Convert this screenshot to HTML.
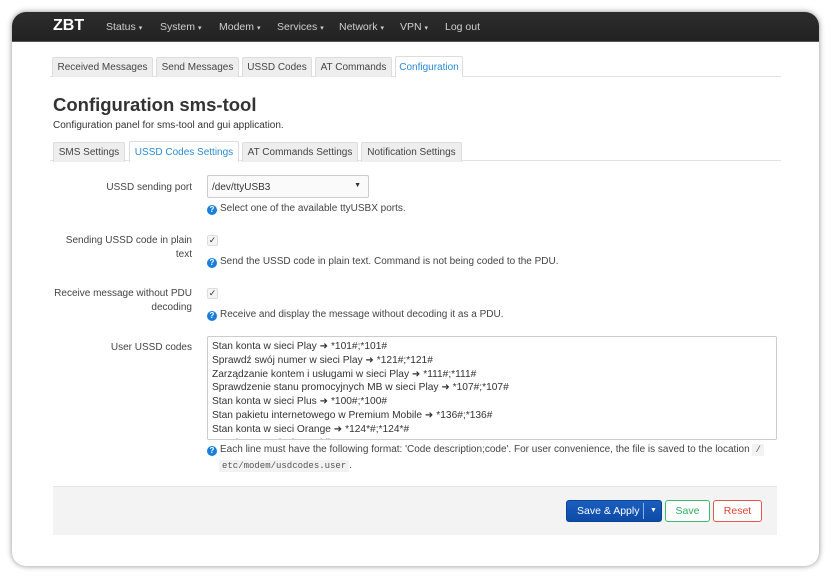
<!DOCTYPE html>
<html><head><meta charset="utf-8"><style>
*{box-sizing:border-box;margin:0;padding:0}
body{width:831px;height:577px;background:#fff;font-family:"Liberation Sans",sans-serif;font-size:10px;color:#404040;position:relative;overflow:hidden}
.frame{position:absolute;left:12px;top:12px;width:807px;height:554px;background:#fff;border-radius:14px;box-shadow:0 0 6px rgba(0,0,0,.45);overflow:hidden}
.nav{position:absolute;left:0;top:0;width:100%;height:30px;background:linear-gradient(#2d2d2d,#222);border-bottom:1px solid #555}
.a{position:absolute;white-space:nowrap}
.nav .a{color:#d0d0d0;font-size:10.5px;top:9px}
.car{font-size:7px}
.tab{position:absolute;height:20px;background:#eee;border:1px solid #ddd;border-bottom:none;border-radius:2px 2px 0 0;color:#444;font-size:10px;text-align:center;line-height:20px;white-space:nowrap}
.tab.act{background:#fff;color:#2a8ad4;height:21px;line-height:22px}
.hline{position:absolute;height:1px;background:#e2e2e2}
.lbl{position:absolute;right:639px;text-align:right;line-height:14px;color:#444;white-space:nowrap}
.help{position:absolute;left:207px;color:#444;white-space:nowrap}
.q{display:inline-block;width:10px;height:10px;border-radius:50%;background:#1a7fd8;color:#fff;font-size:8px;font-weight:bold;text-align:center;line-height:10px;vertical-align:-1px;margin-right:3px}
.cb{position:absolute;left:207px;width:11px;height:11px;border:1px solid #ddd;border-radius:2px;background:#f4f4f4;font-size:9px;line-height:9px;text-align:center;color:#333}
.ta{position:absolute;left:207px;top:336px;width:570px;height:104px;border:1px solid #ccc;border-radius:2px;overflow:hidden;padding:3px 4px;line-height:13.8px;color:#333;font-size:10.2px}
code{font-family:"Liberation Mono",monospace;font-size:9px;background:#f2f2f2;padding:1px 3px;color:#555}
.btn{position:absolute;top:500px;height:22px;border-radius:3px;font-size:10.5px;text-align:center;line-height:20px}
</style></head><body>
<div class="frame">
<div class="nav">
<div class="a" style="left:41px;top:5px;color:#fff;font-size:16px;font-weight:bold">ZBT</div>
<div class="a" style="left:94px">Status <span class="car">▾</span></div>
<div class="a" style="left:148px">System <span class="car">▾</span></div>
<div class="a" style="left:207px">Modem <span class="car">▾</span></div>
<div class="a" style="left:265px">Services <span class="car">▾</span></div>
<div class="a" style="left:327px">Network <span class="car">▾</span></div>
<div class="a" style="left:388px">VPN <span class="car">▾</span></div>
<div class="a" style="left:433px">Log out</div>
</div>
</div>
<div class="hline" style="left:50px;top:76px;width:731px"></div>
<div class="tab" style="left:52px;top:57px;width:101px">Received Messages</div>
<div class="tab" style="left:156px;top:57px;width:83px">Send Messages</div>
<div class="tab" style="left:242px;top:57px;width:70px">USSD Codes</div>
<div class="tab" style="left:315px;top:57px;width:77px">AT Commands</div>
<div class="tab act" style="left:395px;top:56px;width:68px">Configuration</div>
<div class="a" style="left:53px;top:94px;font-size:18.5px;font-weight:bold;color:#333">Configuration sms-tool</div>
<div class="a" style="left:53px;top:120px;font-size:10px;color:#333">Configuration panel for sms-tool and gui application.</div>
<div class="hline" style="left:50px;top:160px;width:731px"></div>
<div class="tab" style="left:53px;top:142px;width:72px">SMS Settings</div>
<div class="tab act" style="left:129px;top:141px;width:110px">USSD Codes Settings</div>
<div class="tab" style="left:242px;top:142px;width:116px">AT Commands Settings</div>
<div class="tab" style="left:361px;top:142px;width:101px">Notification Settings</div>

<div class="lbl" style="top:181px">USSD sending port</div>
<div class="a" style="left:207px;top:175px;width:162px;height:23px;border:1px solid #ccc;border-radius:2px;background:#fafafa;padding:6px 4px;color:#333">/dev/ttyUSB3<span style="position:absolute;right:7px;top:6px;font-size:7px">▼</span></div>
<div class="help" style="top:203px"><span class="q">?</span>Select one of the available ttyUSBX ports.</div>

<div class="lbl" style="top:234px">Sending USSD code in plain<br>text</div>
<div class="cb" style="top:235px">✓</div>
<div class="help" style="top:256px"><span class="q">?</span>Send the USSD code in plain text. Command is not being coded to the PDU.</div>

<div class="lbl" style="top:287px">Receive message without PDU<br>decoding</div>
<div class="cb" style="top:288px">✓</div>
<div class="help" style="top:309px"><span class="q">?</span>Receive and display the message without decoding it as a PDU.</div>

<div class="lbl" style="top:341px">User USSD codes</div>
<div class="ta">Stan konta w sieci Play ➜ *101#;*101#<br>Sprawdź swój numer w sieci Play ➜ *121#;*121#<br>Zarządzanie kontem i usługami w sieci Play ➜ *111#;*111#<br>Sprawdzenie stanu promocyjnych MB w sieci Play ➜ *107#;*107#<br>Stan konta w sieci Plus ➜ *100#;*100#<br>Stan pakietu internetowego w Premium Mobile ➜ *136#;*136#<br>Stan konta w sieci Orange ➜ *124*#;*124*#<br>Stan konta w sieci T-Mobile ➜ *101#;*101#</div>
<div class="help" style="top:444px"><span class="q">?</span>Each line must have the following format: 'Code description;code'. For user convenience, the file is saved to the location <code>/</code></div>
<div class="help" style="top:460px;left:219px"><code>etc/modem/usdcodes.user</code>.</div>

<div class="a" style="left:53px;top:486px;width:724px;height:49px;background:#f3f3f3;border-top:1px solid #e6e6e6"></div>
<div class="btn" style="left:566px;width:96px;background:linear-gradient(#1a5fc0,#0d4ba6);border:1px solid #0c4393;color:#fff;text-align:left;padding-left:10px">Save &amp; Apply<span style="position:absolute;left:76px;top:2px;width:1px;height:16px;background:#8fb0e0"></span><span style="position:absolute;left:83px;font-size:7px">▼</span></div>
<div class="btn" style="left:665px;width:45px;border:1px solid #3cba6f;color:#2dac5d;background:#fff">Save</div>
<div class="btn" style="left:713px;width:49px;border:1px solid #e8584a;color:#e2402f;background:#fff">Reset</div>
</body></html>
